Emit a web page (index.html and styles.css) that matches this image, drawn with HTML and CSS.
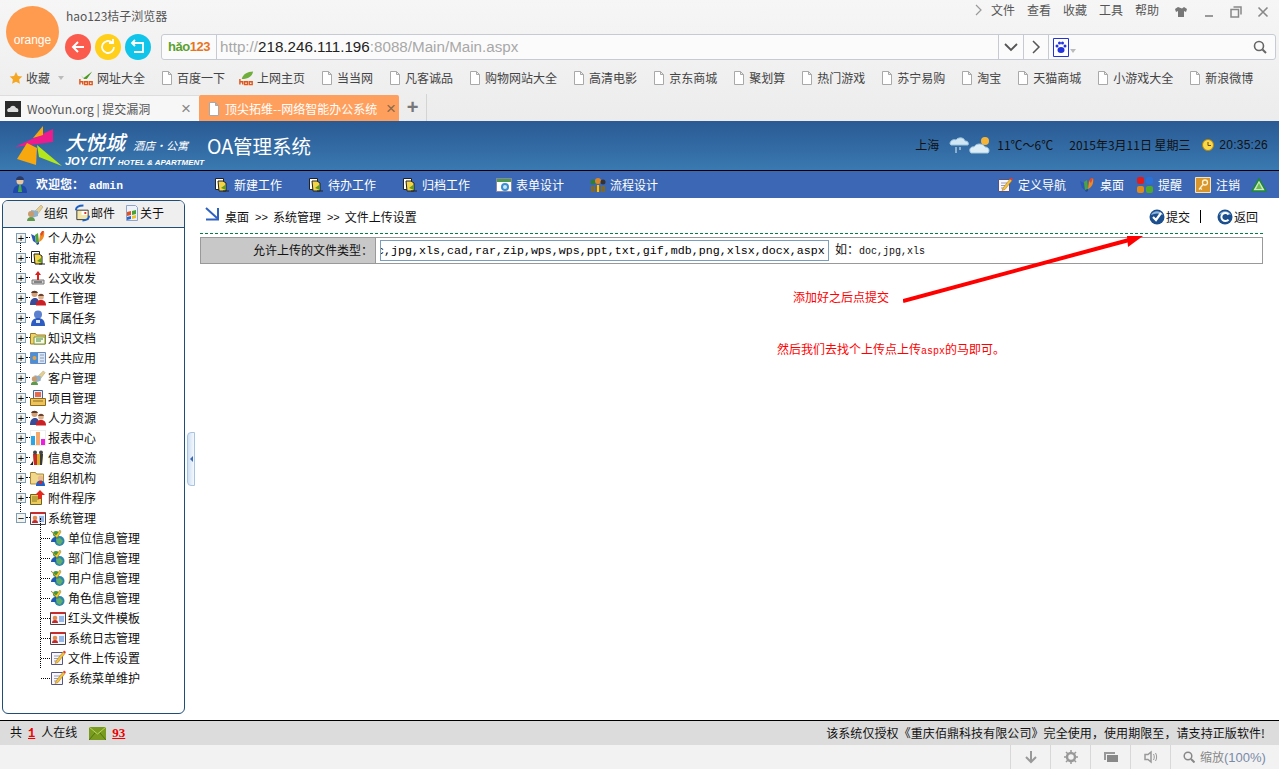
FILE: index.html
```html
<!DOCTYPE html>
<html lang="zh-CN">
<head>
    <meta charset="UTF-8">
    <title>文件上传设置</title>
    <link rel="stylesheet" href="styles.css">
</head>
<body>

<!-- iconos -->
<svg class="defs" aria-hidden="true">
    <symbol id="i-star" viewBox="0 0 16 16"><path d="M8 1l2.2 4.6 5 .6-3.7 3.4 1 5L8 12.2l-4.500 2.400 1-5L.8 6.200l5-.6z" fill="#f5a623"/></symbol>
    <symbol id="i-doc" viewBox="0 0 12 16"><path d="M1.500 1.500h6l3 3v10h-9z M7.500 1.500v3h3" fill="#fff" stroke="#a9a9a9"/></symbol>
    <symbol id="i-hao" viewBox="0 0 18 16"><path d="M3 5l3 3 9-7-7 10z" fill="#4c9a1e"/><path d="M1 9h16v6H1z" fill="#f3f3f3"/><path d="M2 9v6M2 12h3v3M7 12h3v3H7zM12 12h3v3h-3z" fill="none" stroke="#e2571b" stroke-width="1.500"/></symbol>
    <symbol id="i-leaf" viewBox="0 0 18 16"><path d="M4 9c1-5 6-8 12-8-1 5-5 8-12 8z" fill="#6fae3a"/><path d="M2 9v6M2 12h3v3M7 12h3v3H7zM12 12h3v3h-3z" fill="none" stroke="#e2571b" stroke-width="1.500"/></symbol>
    <symbol id="i-flow" viewBox="0 0 16 16"><path d="M1.500 1.500h8v11h-8z" fill="#fff" stroke="#222"/><path d="M4 4h5l3 2v8H5z" fill="#f4d548" stroke="#222"/><path d="M7 11l4-3 1 5z" fill="#5e9e26"/><path d="M9 14h6" stroke="#222"/></symbol>
    <symbol id="i-form" viewBox="0 0 16 16"><path d="M.500 1.500h15v13H.500z" fill="#fff" stroke="#88a"/><path d="M1 2h14v3H1z" fill="#4c9a4a"/><circle cx="9" cy="10" r="4" fill="#3a8fd0"/><circle cx="9" cy="10" r="2" fill="#cfe8f8"/></symbol>
    <symbol id="i-team" viewBox="0 0 16 16"><path d="M1 15V9h4v6zM6 15V8h4v7zM11 15V9h4v6z" fill="#7d6a2a"/><circle cx="3" cy="5" r="2.500" fill="#2f7d33"/><circle cx="8" cy="4" r="3" fill="#d8862a"/><circle cx="13" cy="5" r="2.500" fill="#333"/><path d="M7 8h2v7H7z" fill="#f2c230"/></symbol>
    <symbol id="i-note" viewBox="0 0 16 16"><path d="M1.500 2.500h11v12h-11z" fill="#f6f6fb" stroke="#55557f"/><path d="M4 6h6M4 8.500h4M4 11h3" stroke="#9a9ab5"/><path d="M6 11l7-9 2 1.500-7 9-3 1z" fill="#f3c33c" stroke="#a5701c" stroke-width=".5"/><path d="M13 2l1-1.500 2 1.500-1 1.500z" fill="#e33"/></symbol>
    <symbol id="i-flag" viewBox="0 0 16 16"><path d="M1 4l4 2 1 7-3-2z" fill="#2b57b8"/><path d="M5 5l3-2 1 9-3 1z" fill="#4ca33a"/><path d="M9 12l1-8 4-3c1 5-1 9-5 11z" fill="#f08a24"/><path d="M10 4l2-3 2 0-2 5z" fill="#e24a2a"/><path d="M6 13l3-1 0 2-2 1z" fill="#264a90"/></symbol>
    <symbol id="i-dots" viewBox="0 0 16 16"><rect x="0" y="0" width="7" height="7" rx="2" fill="#e21c1c"/><rect x="9" y="0" width="7" height="7" rx="2" fill="#2a72d8"/><rect x="0" y="9" width="7" height="7" rx="2" fill="#e08a1c"/><rect x="9" y="9" width="7" height="7" rx="2" fill="#4ea82c"/></symbol>
    <symbol id="i-key" viewBox="0 0 16 16"><path d="M.500.500h15v15H.500z" fill="#d9962c" stroke="#f6e3b8"/><circle cx="10" cy="5.500" r="2.500" fill="none" stroke="#fff3d6" stroke-width="1.300"/><path d="M8 7.500l-4 5M5 11l2 1.500" fill="none" stroke="#fff3d6" stroke-width="1.300"/></symbol>
    <symbol id="i-tri" viewBox="0 0 16 14"><path d="M8 1l7 12H1z" fill="#cfe8c2" stroke="#1f8a34" stroke-width="1.500"/><path d="M8 5l3 6H5z" fill="#6cc04a"/></symbol>
    <symbol id="i-admin" viewBox="0 0 16 18"><circle cx="8" cy="5" r="3.500" fill="#e8c6a0"/><path d="M4 4c0-5 8-5 8 0z" fill="#2c3a66"/><path d="M1 17c0-6 3-8 7-8s7 2 7 8z" fill="#1f49a8"/><path d="M7 9h2l1 7H6z" fill="#43a84a"/></symbol>
    <symbol id="i-org" viewBox="0 0 18 18"><path d="M8 8l7-7 2 2-6 8z" fill="#e3cf94" stroke="#a89860" stroke-width=".5"/><path d="M5 6l7 1v5l-6 2z" fill="#8fb0c8"/><circle cx="5" cy="10" r="3" fill="#c99a6c"/><path d="M1 17c0-3 2-4 4-4s4 1 4 4z" fill="#5d9a4c"/></symbol>
    <symbol id="i-mail" viewBox="0 0 18 18"><path d="M3 6h12v10H3z" fill="#f3e5a8" stroke="#333"/><path d="M8 7h6v4H8z" fill="#fff"/><path d="M11 8h2v2h-2z" fill="#d33"/><path d="M2 6c0-4 4-5 8-5M16 12c0 3-3 5-7 5" fill="none" stroke="#1c62c8" stroke-width="2"/></symbol>
    <symbol id="i-about" viewBox="0 0 16 18"><path d="M2.500 1.500h9l2 2v13h-11z" fill="#eef3fb" stroke="#8ea4c8"/><path d="M3 8l4-1v4l-4 1z" fill="#e2501f"/><path d="M8 7l4-1v4l-4 1z" fill="#46a232"/><path d="M3 13l4-1v3l-4 1z" fill="#2a66c8"/><path d="M8 12l4-1v3l-4 1z" fill="#eec02a"/></symbol>
    <symbol id="i-stamp" viewBox="0 0 16 16"><path d="M2 10h12v4H2z" fill="#d4d4d4" stroke="#777"/><path d="M4 12h8" stroke="#333"/><path d="M8 1l3 4H9v5H7V5H5z" fill="#d8201c"/></symbol>
    <symbol id="i-people" viewBox="0 0 16 16"><circle cx="4.500" cy="4" r="3" fill="#d4a078"/><path d="M1 3c1-3 6-3 7 0z" fill="#5c3a2a"/><path d="M0 15c0-5 2-7 5-7s4 2 4 7z" fill="#3a4c98"/><circle cx="11" cy="7" r="2.800" fill="#e0b08c"/><path d="M8 6c1-3 5-3 6 0z" fill="#6c4430"/><path d="M6 15.500c0-4 2-5.500 5-5.500s5 1.500 5 5.500z" fill="#cc2024"/></symbol>
    <symbol id="i-person" viewBox="0 0 16 16"><circle cx="8" cy="4.500" r="4" fill="#5a80cf"/><path d="M1 16c0-6 3-8 7-8s7 2 7 8z" fill="#2f5cc0"/><path d="M6 10h4v3H6z" fill="#dfe8fa"/></symbol>
    <symbol id="i-folder" viewBox="0 0 16 16"><path d="M.500 3.500h5l1 1.500h9v9H.500z" fill="#f2d36a" stroke="#9a7e26"/><path d="M4 7h11v7H4z" fill="#f9f7e8" stroke="#7a9a3a"/><path d="M6 9h7M6 11h5" stroke="#3c8a3c"/></symbol>
    <symbol id="i-pub" viewBox="0 0 16 16"><path d="M.500 2.500h15v11H.500z" fill="#dbe6f5" stroke="#6a8cc0"/><path d="M1 3h7v10H1z" fill="#4a90d8"/><circle cx="4.500" cy="8" r="2" fill="#e8a040"/><path d="M10 5h4M10 8h4M10 11h4" stroke="#8a9ab5"/></symbol>
    <symbol id="i-box" viewBox="0 0 16 16"><path d="M3.500 .500h9v9h-9z" fill="#e9eef8" stroke="#44689a"/><path d="M5 2h6v5H5z" fill="#e86a4c"/><path d="M.500 8.500h15v7H.500z" fill="#eec45a" stroke="#8e6c1c"/><path d="M3 11h10" stroke="#8e6c1c"/></symbol>
    <symbol id="i-bars" viewBox="0 0 16 16"><path d="M.500.500h15v15H.500z" fill="#fff" stroke="#ddd" stroke-dasharray="1 1"/><path d="M1 6h4v9H1z" fill="#2aa6e8"/><path d="M6 2h4v13H6z" fill="#f5a86c"/><path d="M11 9h4v6h-4z" fill="#f01ce0"/></symbol>
    <symbol id="i-gift" viewBox="0 0 16 16"><path d="M3 4h10l-1 11H4z" fill="#d8b22a"/><path d="M3 4h4v11H4z" fill="#c62a2a"/><path d="M10 4h3l-1 11h-2z" fill="#3a3a3a"/><circle cx="5" cy="2.500" r="2" fill="#444"/><circle cx="11" cy="2.500" r="2" fill="#444"/><path d="M0 15l3-4v4z" fill="#222"/></symbol>
    <symbol id="i-orgf" viewBox="0 0 16 16"><path d="M.500 2.500h5l1 1.500h7v10H.500z" fill="#f2d88a" stroke="#a88a3a"/><circle cx="10.500" cy="8" r="2.600" fill="#e8b890"/><path d="M6 16c0-4 2-5.500 4.500-5.500S15 12 15 16z" fill="#2060c8"/><path d="M9 11h3v3H9z" fill="#d82424"/></symbol>
    <symbol id="i-att" viewBox="0 0 16 16"><path d="M.500 4.500h11v10H.500z" fill="#eccb5a" stroke="#6e6420"/><path d="M2 7h7M2 9h7M2 11h5" stroke="#8a7a20"/><path d="M10 0l5 5h-3v4H8V5H5z" fill="#e62a20"/></symbol>
    <symbol id="i-card" viewBox="0 0 16 16"><path d="M.500 2.500h15v12H.500z" fill="#f4f6fb" stroke="#444"/><path d="M1 2h14v2H1z" fill="#c92a2a"/><circle cx="5" cy="8" r="2.300" fill="#e08a50"/><path d="M2 13c0-2 1-3 3-3s3 1 3 3z" fill="#c42828"/><path d="M9 7h5M9 9h5M9 11h5" stroke="#3a7ad0"/></symbol>
    <symbol id="i-globe" viewBox="0 0 16 16"><circle cx="9.500" cy="11" r="5" fill="#2f86a8"/><path d="M6 9l4-1 3 3-3 4-3-2z" fill="#5fae6a"/><circle cx="6" cy="4" r="3" fill="#3b9a44"/><path d="M1 1l5 4 4-5 1 2-4 6z" fill="#f0cc2a" stroke="#6a5a10" stroke-width=".4"/><path d="M1 12c0-3 2-5 5-5v5z" fill="#1f5ab0"/></symbol>
    <symbol id="i-ok" viewBox="0 0 16 16"><circle cx="8" cy="8" r="7.500" fill="#1c4f8e"/><path d="M2 6c2-5 10-5 12 0-4-2-8-2-12 0z" fill="#8db6e0"/><path d="M4 8l3 3 5-7" fill="none" stroke="#fff" stroke-width="2.200"/></symbol>
    <symbol id="i-back" viewBox="0 0 16 16"><circle cx="8" cy="8" r="7.500" fill="#1c4f8e"/><path d="M2 6c2-5 10-5 12 0-4-2-8-2-12 0z" fill="#8db6e0"/><path d="M11.500 5.500A4 4 0 1 0 11.500 10.500" fill="none" stroke="#fff" stroke-width="2"/></symbol>
</svg>

<div class="logo-orange">orange</div>

<!-- navegador -->
<header class="browser">
    <div class="title-row">
        <span class="app-name">hao123桔子浏览器</span>
        <div class="menu">
            <svg class="menu-more" width="8" height="12" viewBox="0 0 8 12"><path d="M1 1l5 5-5 5" fill="none" stroke="#999" stroke-width="1.200"/></svg>
            <span>文件</span><span>查看</span><span>收藏</span><span>工具</span><span>帮助</span>
        </div>
        <div class="win-btns">
            <svg width="14" height="12" viewBox="0 0 14 12"><path d="M4 1L1 3l1 3 2-1v6h6V5l2 1 1-3-3-2-2 1.500z" fill="#777"/></svg>
            <svg width="12" height="12" viewBox="0 0 12 12"><path d="M2 10h8" stroke="#999" stroke-width="2"/></svg>
            <svg width="12" height="12" viewBox="0 0 12 12"><path d="M3.500 1h7.500v7.500M1 3.500h7.500V11H1z" fill="none" stroke="#888" stroke-width="1.500"/></svg>
            <svg width="12" height="12" viewBox="0 0 12 12"><path d="M1.500 1.500l9 9M10.500 1.500l-9 9" stroke="#888" stroke-width="1.600"/></svg>
        </div>
    </div>

    <div class="toolbar">
        <div class="nav-btns">
            <span class="round round-red"><svg width="16" height="16" viewBox="0 0 16 16"><path d="M14 8H3M8 3L3 8l5 5" fill="none" stroke="#fff" stroke-width="2"/></svg></span>
            <span class="round round-yellow"><svg width="16" height="16" viewBox="0 0 16 16"><path d="M12 3.500A6 6 0 1 0 14 8M9 4h4V0" fill="none" stroke="#fff" stroke-width="1.800"/></svg></span>
            <span class="round round-blue"><svg width="16" height="16" viewBox="0 0 16 16"><path d="M5 1L2 4l3 3M2 4h11v9H4" fill="none" stroke="#fff" stroke-width="1.800"/></svg></span>
        </div>
        <div class="address">
            <span class="hao-logo"><b class="hao-green">hǎo</b><b class="hao-orange">123</b></span>
            <span class="url"><i>http://</i>218.246.111.196<i>:8088/Main/Main.aspx</i></span>
            <span class="addr-btn"><svg width="14" height="9" viewBox="0 0 14 9"><path d="M1 1l6 6 6-6" fill="none" stroke="#555" stroke-width="1.800"/></svg></span>
            <span class="addr-btn"><svg width="9" height="14" viewBox="0 0 9 14"><path d="M1 1l6 6-6 6" fill="none" stroke="#555" stroke-width="1.500"/></svg></span>
            <span class="search">
                <svg width="16" height="19" viewBox="0 0 16 19"><path d="M.500.500h15v18H.500z" fill="#fff" stroke="#2233dd"/><ellipse cx="8" cy="12" rx="3.500" ry="3" fill="#2233dd"/><circle cx="4" cy="8" r="1.500" fill="#2233dd"/><circle cx="12" cy="8" r="1.500" fill="#2233dd"/><circle cx="6.500" cy="5" r="1.500" fill="#2233dd"/><circle cx="9.500" cy="5" r="1.500" fill="#2233dd"/></svg>
                <em class="caret caret-paw"></em>
                <svg class="glass" width="14" height="14" viewBox="0 0 14 14"><circle cx="6" cy="6" r="4.500" fill="none" stroke="#666" stroke-width="1.600"/><path d="M9.500 9.500L13 13" stroke="#666" stroke-width="2"/></svg>
            </span>
        </div>
    </div>

    <div class="bookmarks">
        <span class="bm bm-fav"><svg width="14" height="14"><use href="#i-star"/></svg>收藏<em class="caret"></em></span>
        <span class="bm bm-hao"><svg width="17" height="16"><use href="#i-hao"/></svg>网址大全</span>
        <span class="bm"><svg width="12" height="16"><use href="#i-doc"/></svg>百度一下</span>
        <span class="bm bm-hao"><svg width="17" height="16"><use href="#i-leaf"/></svg>上网主页</span>
        <span class="bm"><svg width="12" height="16"><use href="#i-doc"/></svg>当当网</span>
        <span class="bm"><svg width="12" height="16"><use href="#i-doc"/></svg>凡客诚品</span>
        <span class="bm"><svg width="12" height="16"><use href="#i-doc"/></svg>购物网站大全</span>
        <span class="bm"><svg width="12" height="16"><use href="#i-doc"/></svg>高清电影</span>
        <span class="bm"><svg width="12" height="16"><use href="#i-doc"/></svg>京东商城</span>
        <span class="bm"><svg width="12" height="16"><use href="#i-doc"/></svg>聚划算</span>
        <span class="bm"><svg width="12" height="16"><use href="#i-doc"/></svg>热门游戏</span>
        <span class="bm"><svg width="12" height="16"><use href="#i-doc"/></svg>苏宁易购</span>
        <span class="bm"><svg width="12" height="16"><use href="#i-doc"/></svg>淘宝</span>
        <span class="bm"><svg width="12" height="16"><use href="#i-doc"/></svg>天猫商城</span>
        <span class="bm"><svg width="12" height="16"><use href="#i-doc"/></svg>小游戏大全</span>
        <span class="bm"><svg width="12" height="16"><use href="#i-doc"/></svg>新浪微博</span>
    </div>

    <div class="tabs">
        <div class="tab">
            <svg width="16" height="16" viewBox="0 0 16 16"><path d="M0 0h16v16H0z" fill="#2b2b2b"/><path d="M3 11c-2-2 0-4 2-4 1-3 5-3 6 0 2 0 3 2 2 4z" fill="#ddd"/></svg>
            <span class="tab-text">WooYun.org | 提交漏洞</span>
            <span class="tab-close">×</span>
        </div>
        <div class="tab tab-active">
            <svg width="12" height="16"><use href="#i-doc"/></svg>
            <span class="tab-text">顶尖拓维--网络智能办公系统</span>
            <span class="tab-close">×</span>
        </div>
        <div class="tab-add">+</div>
    </div>
</header>

<!-- cabecera OA -->
<div class="oa-head">
    <svg class="joy-mark" width="50" height="44" viewBox="0 0 50 44">
        <path d="M1 23L39 5v13z" fill="#ec1c8c"/>
        <path d="M3 35L13 19l10 5-1 17z" fill="#f7a80e"/>
        <path d="M29 2L19 14l10-3z" fill="#f7a80e"/>
        <path d="M23 21l25 21-23-9z" fill="#b4e61c"/>
    </svg>
    <div class="joy-name">
        <div class="joy-cn">大悦城<small>酒店·公寓</small></div>
        <div class="joy-en">JOY CITY <small>HOTEL &amp; APARTMENT</small></div>
    </div>
    <div class="oa-title">OA管理系统</div>
    <div class="oa-info">
        <span class="city">上海</span>
        <svg class="weather" width="44" height="22" viewBox="0 0 44 22">
            <path d="M2 10c0-4 4-5 6-4 2-3 8-3 9 1 3 0 4 2 3 4H3z" fill="#cfe6f5" stroke="#9dc4dc"/>
            <path d="M8 13v6M12 13v3" stroke="#a8c6da" stroke-width="1.500"/>
            <circle cx="37" cy="7" r="4" fill="#f4b43a"/>
            <path d="M23 19c-3-3 0-7 3-6 2-4 9-4 11 0 4 0 5 4 3 6z" fill="#dcedf7" stroke="#a4c8de"/>
        </svg>
        <span class="temp">11℃～6℃</span>
        <span class="date">2015年3月11日 星期三</span>
        <svg class="clock" width="12" height="12" viewBox="0 0 12 12"><circle cx="6" cy="6" r="5.500" fill="#f9d84a" stroke="#b8860b"/><path d="M6 3v3.500h3" fill="none" stroke="#704a00"/></svg>
        <span class="time">20:35:26</span>
    </div>
</div>

<nav class="oa-nav">
    <div class="welcome"><svg width="16" height="18"><use href="#i-admin"/></svg><b>欢迎您：<span class="admin">admin</span></b></div>
    <div class="nav-left">
        <span class="nav-item"><svg width="16" height="16"><use href="#i-flow"/></svg>新建工作</span>
        <span class="nav-item"><svg width="16" height="16"><use href="#i-flow"/></svg>待办工作</span>
        <span class="nav-item"><svg width="16" height="16"><use href="#i-flow"/></svg>归档工作</span>
        <span class="nav-item"><svg width="16" height="16"><use href="#i-form"/></svg>表单设计</span>
        <span class="nav-item"><svg width="16" height="16"><use href="#i-team"/></svg>流程设计</span>
    </div>
    <div class="nav-right">
        <span class="nav-item"><svg width="16" height="16"><use href="#i-note"/></svg>定义导航</span>
        <span class="nav-item"><svg width="16" height="16"><use href="#i-flag"/></svg>桌面</span>
        <span class="nav-item"><svg width="16" height="16"><use href="#i-dots"/></svg>提醒</span>
        <span class="nav-item"><svg width="16" height="16"><use href="#i-key"/></svg>注销</span>
        <svg class="nav-up" width="16" height="14"><use href="#i-tri"/></svg>
    </div>
</nav>

<div class="oa-body">
    <aside class="panel">
        <div class="panel-tools">
            <span class="ptool"><svg width="18" height="18"><use href="#i-org"/></svg>组织</span>
            <span class="ptool"><svg width="17" height="18"><use href="#i-mail"/></svg>邮件</span>
            <span class="ptool ptool-last"><svg width="16" height="18"><use href="#i-about"/></svg>关于</span>
        </div>
        <ul class="tree">
            <li class="tree-row"><span class="pm">+</span><svg><use href="#i-flag"/></svg>个人办公</li>
            <li class="tree-row"><span class="pm">+</span><svg><use href="#i-flow"/></svg>审批流程</li>
            <li class="tree-row"><span class="pm">+</span><svg><use href="#i-stamp"/></svg>公文收发</li>
            <li class="tree-row"><span class="pm">+</span><svg><use href="#i-people"/></svg>工作管理</li>
            <li class="tree-row"><span class="pm">+</span><svg><use href="#i-person"/></svg>下属任务</li>
            <li class="tree-row"><span class="pm">+</span><svg><use href="#i-folder"/></svg>知识文档</li>
            <li class="tree-row"><span class="pm">+</span><svg><use href="#i-pub"/></svg>公共应用</li>
            <li class="tree-row"><span class="pm">+</span><svg><use href="#i-org"/></svg>客户管理</li>
            <li class="tree-row"><span class="pm">+</span><svg><use href="#i-box"/></svg>项目管理</li>
            <li class="tree-row"><span class="pm">+</span><svg><use href="#i-people"/></svg>人力资源</li>
            <li class="tree-row"><span class="pm">+</span><svg><use href="#i-bars"/></svg>报表中心</li>
            <li class="tree-row"><span class="pm">+</span><svg><use href="#i-gift"/></svg>信息交流</li>
            <li class="tree-row"><span class="pm">+</span><svg><use href="#i-orgf"/></svg>组织机构</li>
            <li class="tree-row"><span class="pm">+</span><svg><use href="#i-att"/></svg>附件程序</li>
            <li class="tree-row"><span class="pm">−</span><svg><use href="#i-card"/></svg>系统管理</li>
            <li>
                <ul class="tree-sub">
                    <li class="tree-row"><svg><use href="#i-globe"/></svg>单位信息管理</li>
                    <li class="tree-row"><svg><use href="#i-globe"/></svg>部门信息管理</li>
                    <li class="tree-row"><svg><use href="#i-globe"/></svg>用户信息管理</li>
                    <li class="tree-row"><svg><use href="#i-globe"/></svg>角色信息管理</li>
                    <li class="tree-row"><svg><use href="#i-card"/></svg>红头文件模板</li>
                    <li class="tree-row"><svg><use href="#i-card"/></svg>系统日志管理</li>
                    <li class="tree-row"><svg><use href="#i-note"/></svg>文件上传设置</li>
                    <li class="tree-row"><svg><use href="#i-note"/></svg>系统菜单维护</li>
                </ul>
            </li>
        </ul>
    </aside>

    <div class="splitter"><em></em></div>

    <main class="main">
        <div class="crumb-bar">
            <svg class="crumb-icon" width="15" height="14" viewBox="0 0 15 14"><path d="M1 1l11 10M13 1v11.500H1" fill="none" stroke="#2f62c0" stroke-width="2"/></svg>
            <span class="crumb">桌面</span><span class="crumb-sep">&gt;&gt;</span>
            <span class="crumb">系统管理</span><span class="crumb-sep">&gt;&gt;</span>
            <span class="crumb">文件上传设置</span>
            <div class="crumb-actions">
                <span class="act"><svg width="16" height="16"><use href="#i-ok"/></svg>提交</span>
                <span class="act-sep"></span>
                <span class="act"><svg width="16" height="16"><use href="#i-back"/></svg>返回</span>
            </div>
        </div>

        <div class="field">
            <label class="field-label" for="tipos">允许上传的文件类型：</label>
            <div class="field-value">
                <input id="tipos" class="field-input" type="text" value="doc,jpg,xls,cad,rar,zip,wps,wps,ppt,txt,gif,mdb,png,xlsx,docx,aspx">
                <span class="hint">如：<span class="hint-ex">doc,jpg,xls</span></span>
            </div>
        </div>

        <p class="note note-a">添加好之后点提交</p>
        <p class="note note-b">然后我们去找个上传点上传<span class="note-latin">aspx</span>的马即可。</p>

        <svg class="red-arrow" width="245" height="70" viewBox="0 0 245 70">
            <path d="M0 67L226 6" stroke="#ff0000" stroke-width="4"/>
            <path d="M240 2H224l1 11z" fill="#ff0000"/>
        </svg>
    </main>
</div>

<footer class="oa-foot">
    <span class="online">共<u>1</u>人在线</span>
    <svg class="mail-ico" width="17" height="13" viewBox="0 0 17 13"><path d="M0 0h17v13H0z" fill="#7a9a20"/><path d="M0 0l8.500 7L17 0" fill="none" stroke="#b8d65a"/><path d="M0 13l6-7M17 13l-6-7" stroke="#4f7410"/></svg>
    <u class="mail-count">93</u>
    <span class="license">该系统仅授权《重庆佰鼎科技有限公司》完全使用，使用期限至，请支持正版软件!</span>
</footer>

<div class="statusbar">
    <span class="st-cell"><svg width="14" height="14" viewBox="0 0 14 14"><path d="M7 1v11M2 7l5 5 5-5" fill="none" stroke="#999" stroke-width="2"/></svg></span>
    <span class="st-cell"><svg width="14" height="14" viewBox="0 0 14 14"><circle cx="7" cy="7" r="4" fill="none" stroke="#999" stroke-width="2.500"/><path d="M7 0v3M7 11v3M0 7h3M11 7h3M2 2l2 2M10 10l2 2M12 2l-2 2M4 10l-2 2" stroke="#999" stroke-width="1.500"/></svg></span>
    <span class="st-cell"><svg width="16" height="14" viewBox="0 0 16 14"><path d="M1 2h11v2H3v6H1z" fill="#999"/><path d="M4 5h11v7H4z" fill="#888"/></svg></span>
    <span class="st-cell"><svg width="14" height="14" viewBox="0 0 14 14"><path d="M1 4.500h3L7 2v10L4 9.500H1z" fill="none" stroke="#999" stroke-width="1.500"/><path d="M9.500 4c1 2 1 4 0 6M11.500 3c1.500 2.500 1.500 5.500 0 8" fill="none" stroke="#999"/></svg></span>
    <span class="st-zoom"><svg width="12" height="12" viewBox="0 0 12 12"><circle cx="5" cy="5" r="3.800" fill="none" stroke="#888" stroke-width="1.500"/><path d="M8 8l3.500 3.500" stroke="#888" stroke-width="2"/></svg><span>缩放<span class="zoom-num">(100%)</span></span></span>
</div>

</body>
</html>
```

FILE: styles.css
```css
* {
    box-sizing: border-box;
}

html, body {
    margin: 0;
    height: 769px;
    overflow: hidden;
}

body {
    position: relative;
    display: flex;
    flex-direction: column;
    background: #fff;
    color: #111;
    font-family: "Noto Sans CJK SC", "Liberation Sans", sans-serif;
    font-size: 12px;
    line-height: 16px;
}

ul {
    list-style: none;
    margin: 0;
    padding: 0;
}

em, i {
    font-style: normal;
}

svg {
    flex: none;
    display: block;
}

.defs {
    position: absolute;
    width: 0;
    height: 0;
}

/* navegador */
.browser {
    flex: none;
    height: 121px;
    background: linear-gradient(#f6f6f6, #ececec);
}

.logo-orange {
    position: absolute;
    left: 6px;
    top: 6px;
    width: 53px;
    height: 52px;
    border-radius: 50%;
    background: #ff9b4f;
    color: #fff;
    font-family: "Liberation Sans", sans-serif;
    font-size: 12px;
    line-height: 12px;
    text-align: center;
    padding-top: 28px;
}

.title-row {
    height: 33px;
    display: flex;
    align-items: flex-start;
    padding: 8px 13px 0 66px;
    color: #555;
}

.app-name {
    flex: 1;
    font-size: 12px;
}

.menu {
    display: flex;
    align-items: center;
    gap: 12px;
    margin-top: -6px;
    height: 16px;
}

.menu-more {
    margin-right: -4px;
}

.win-btns {
    display: flex;
    gap: 15px;
    margin: -2px 0 0 15px;
    width: 92px;
}

.toolbar {
    height: 27px;
    margin-top: 1px;
    display: flex;
    padding-left: 65px;
    padding-right: 3px;
}

.nav-btns {
    display: flex;
    gap: 4px;
    width: 96px;
}

.round {
    width: 26px;
    height: 26px;
    border-radius: 50%;
    display: flex;
    align-items: center;
    justify-content: center;
}

.round-red { background: #fb5b4c; }
.round-yellow { background: #ffcf1a; }
.round-blue { background: #10c4ea; }

.address {
    flex: 1;
    display: flex;
    height: 26px;
    background: #fbfbfb;
    border: 1px solid #c6cbd3;
    border-radius: 3px;
    align-items: stretch;
}

.hao-logo {
    width: 55px;
    border-right: 1px solid #c6cbd3;
    font-family: "Liberation Sans", sans-serif;
    font-size: 13px;
    line-height: 24px;
    text-align: center;
    letter-spacing: -0.5px;
}

.hao-green { color: #5aa02c; }
.hao-orange { color: #e8741c; }

.url {
    flex: 1;
    padding-left: 3px;
    font-family: "Liberation Sans", sans-serif;
    font-size: 15.200px;
    line-height: 24px;
    color: #222;
}

.url i {
    color: #a8a8a8;
}

.addr-btn {
    width: 25px;
    border-left: 1px solid #c6cbd3;
    display: flex;
    align-items: center;
    justify-content: center;
}

.search {
    width: 227px;
    border-left: 1px solid #c6cbd3;
    display: flex;
    align-items: center;
    padding: 0 8px 0 4px;
}

.glass {
    margin-left: auto;
}

.bookmarks {
    height: 33px;
    display: flex;
    align-items: center;
    gap: 16px;
    padding-left: 9px;
    color: #444;
}

.bm {
    display: flex;
    align-items: center;
    gap: 4px;
    white-space: nowrap;
}

.bm-fav {
    gap: 3px;
    margin-right: 1px;
}

.bm-hao {
    gap: 2px;
    margin-left: -3px;
}

.caret {
    width: 0;
    height: 0;
    margin-left: 5px;
    border: 3px solid transparent;
    border-top: 4px solid #bbb;
    border-bottom: 0;
}

.caret-paw {
    margin: 8px 0 0 1px;
}

.tabs {
    height: 28px;
    display: flex;
    border-bottom: 1px solid #b9b9b9;
}

.tab {
    width: 199px;
    height: 27px;
    margin-top: 1px;
    display: flex;
    align-items: center;
    gap: 6px;
    padding: 0 8px 0 5px;
    background: #f7f7f7;
    border-top: 1px solid #ddd;
    color: #555;
}

.tab-active {
    width: 200px;
    background: #ff9f5e;
    border-top-color: #ff9f5e;
    border-radius: 2px 2px 0 0;
    color: #fff;
    padding: 0 8px 0 9px;
    gap: 5px;
}

.tab-text {
    flex: 1;
    white-space: nowrap;
}

.tab-close {
    font-family: "Liberation Sans", sans-serif;
    font-size: 17px;
    color: #888;
}

.tab-active .tab-text {
    flex: none;
    width: 156px;
}

.tab-active .tab-close {
    color: #8a6a4a;
}

.tab-add {
    width: 28px;
    border-right: 1px solid #d4d4d4;
    font-family: "Liberation Sans", sans-serif;
    font-size: 20px;
    line-height: 27px;
    text-align: center;
    font-weight: bold;
    color: #777;
}

/* cabecera OA */
.oa-head {
    flex: none;
    height: 50px;
    display: flex;
    align-items: flex-start;
    background: linear-gradient(#2a5a94, #3a79b1);
    border-bottom: 1px solid #000;
    padding: 3px 11px 0 14px;
}

.joy-name {
    margin: 7px 0 0 1px;
    width: 142px;
    color: #fff;
    font-style: italic;
}

.joy-cn {
    font-size: 20px;
    line-height: 22px;
    font-weight: 500;
    white-space: nowrap;
}

.joy-cn small {
    font-size: 11px;
    font-weight: normal;
    margin-left: 8px;
}

.joy-en {
    font-family: "Liberation Sans", sans-serif;
    font-size: 11px;
    line-height: 11px;
    font-weight: bold;
    white-space: nowrap;
}

.joy-en small {
    font-size: 8px;
}

.oa-title {
    margin-top: 10px;
    font-size: 19.500px;
    line-height: 24px;
    color: #fff;
}

.oa-info {
    margin-left: auto;
    margin-top: 9px;
    display: flex;
    align-items: center;
    height: 24px;
    color: #111;
}

.city {
    font-size: 12px;
}

.weather {
    margin-left: 9px;
}

.temp {
    margin-left: 5px;
    width: 72px;
}

.date {
    width: 133px;
}

.time {
    margin-left: 5px;
    letter-spacing: 0.250px;
    font-family: "Liberation Sans", sans-serif;
    font-size: 12px;
}

.oa-nav {
    flex: none;
    height: 27px;
    display: flex;
    align-items: center;
    background: #3c67b5;
    color: #fff;
    padding: 0 12px;
}

.welcome {
    display: flex;
    align-items: center;
    gap: 8px;
    width: 202px;
}

.admin {
    margin-left: 5px;
    font-family: "Liberation Mono", monospace;
    font-size: 11.300px;
}

.nav-left {
    display: flex;
    gap: 26px;
}

.nav-right {
    margin-left: auto;
    display: flex;
    align-items: center;
    gap: 13px;
}

.nav-up {
    margin-left: -2px;
}

.nav-item {
    display: flex;
    align-items: center;
    gap: 5px;
    white-space: nowrap;
}

.nav-left .nav-item {
    gap: 4px;
}

/* contenido */
.oa-body {
    flex: none;
    height: 522px;
    display: flex;
    padding-left: 2px;
}

.panel {
    flex: none;
    width: 183px;
    height: 514px;
    margin-top: 2px;
    border: 1px solid #1f4e79;
    border-radius: 6px;
    overflow: hidden;
}

.panel-tools {
    height: 27px;
    background: #efefef;
    border-bottom: 1px solid #1f4e79;
    display: flex;
    align-items: center;
    gap: 6px;
    padding: 0 0 2px 23px;
}

.ptool {
    display: flex;
    align-items: center;
}

.ptool-last {
    margin-left: 3px;
}

.tree {
    position: relative;
    padding: 0 0 0 17px;
}

.tree::before {
    content: "";
    position: absolute;
    left: 17px;
    top: 10px;
    height: 280px;
    border-left: 1px dotted #000;
}

.tree-row {
    position: relative;
    height: 20px;
    display: flex;
    align-items: center;
    white-space: nowrap;
    gap: 2px;
}

.tree-row svg {
    width: 16px;
    height: 16px;
}

.pm {
    flex: none;
    width: 10px;
    height: 10px;
    margin-left: -4px;
    margin-right: 2px;
    border: 1px solid #7f9db9;
    background: #f4f4ee;
    font-family: "Liberation Sans", sans-serif;
    font-size: 11px;
    line-height: 8px;
    text-align: center;
    color: #000;
    position: relative;
}

.pm::after {
    content: "";
    position: absolute;
    left: 9px;
    top: 3px;
    width: 4px;
    border-top: 1px dotted #000;
}

.tree-sub {
    position: relative;
    padding-left: 30px;
}

.tree-sub::before {
    content: "";
    position: absolute;
    left: 20px;
    top: -10px;
    height: 150px;
    border-left: 1px dotted #000;
}

.tree-sub .tree-row::before {
    content: "";
    position: absolute;
    left: -9px;
    top: 10px;
    width: 9px;
    border-top: 1px dotted #000;
}

.splitter {
    flex: none;
    align-self: center;
    width: 8px;
    height: 54px;
    margin: 0 5px 0 2px;
    background: linear-gradient(90deg, #cfe0f3, #f4f8fc);
    border: 1px solid #a9c4e0;
    border-radius: 4px 0 0 4px;
    display: flex;
    align-items: center;
    justify-content: center;
}

.splitter em {
    width: 0;
    height: 0;
    border: 3px solid transparent;
    border-right: 3px solid #3c67b5;
    border-left: 0;
}

.main {
    position: relative;
    flex: none;
    width: 1063px;
}

.crumb-bar {
    height: 36px;
    display: flex;
    align-items: center;
    border-bottom: 1px dashed #008040;
    padding: 2px 5px 0 5px;
}

.crumb-icon {
    margin: -6px 5px 0 0;
}

.crumb-sep {
    margin: 0 5px 0 6px;
    font-family: "Liberation Sans", sans-serif;
    font-size: 11px;
}

.crumb-actions {
    margin-left: auto;
    display: flex;
    align-items: center;
}

.act {
    display: flex;
    align-items: center;
    gap: 1px;
}

.act-sep {
    width: 1px;
    height: 13px;
    background: #000;
    margin: 0 16px 0 10px;
}

.field {
    height: 27px;
    margin-top: 3px;
    display: flex;
    border: 1px solid #999;
}

.field-label {
    flex: none;
    width: 175px;
    background: #c8c8c8;
    border-right: 1px solid #999;
    padding-right: 2px;
    line-height: 24px;
    text-align: right;
}

.field-value {
    flex: 1;
    display: flex;
    align-items: center;
    padding-left: 4px;
}

.field-input {
    flex: none;
    width: 449px;
    height: 21px;
    padding: 0;
    text-indent: -18px;
    border: 1px solid #7a9ebd;
    outline: none;
    font-family: "Liberation Mono", monospace;
    font-size: 11.670px;
    color: #000;
}

.hint {
    margin-left: 6px;
    white-space: nowrap;
}

.hint-ex {
    font-family: "Liberation Mono", monospace;
    font-size: 10px;
}

.note {
    margin: 0;
    color: #ff0000;
    line-height: 14px;
}

.note-a {
    margin: 26px 0 0 593px;
}

.note-b {
    margin: 38px 0 0 577px;
}

.note-latin {
    font-family: "Liberation Mono", monospace;
    font-size: 10px;
}

.red-arrow {
    position: absolute;
    left: 703px;
    top: 36px;
}

/* pie */
.oa-foot {
    flex: none;
    height: 25px;
    display: flex;
    align-items: center;
    background: #dcdcdc;
    border-top: 1px solid #000;
    padding: 0 14px 0 10px;
}

.online u {
    margin: 0 6px;
    color: #e00;
    font-weight: bold;
    font-family: "Liberation Mono", monospace;
}

.mail-ico {
    margin-left: 12px;
}

.mail-count {
    margin-left: 6px;
    color: #e00;
    font-weight: bold;
    font-family: "Liberation Serif", serif;
    font-size: 13px;
}

.license {
    margin-left: auto;
    letter-spacing: 0.080px;
}

.statusbar {
    flex: none;
    height: 24px;
    display: flex;
    align-items: stretch;
    justify-content: flex-end;
    background: #f2f2f2;
    color: #888;
    padding-right: 11px;
}

.st-cell {
    width: 40px;
    border-left: 1px solid #d8d8d8;
    display: flex;
    align-items: center;
    justify-content: center;
}

.st-zoom {
    width: 98px;
    border-left: 1px solid #d8d8d8;
    display: flex;
    align-items: center;
    gap: 5px;
    padding-left: 12px;
    white-space: nowrap;
}

.zoom-num {
    font-family: "Liberation Sans", sans-serif;
    font-size: 13px;
    color: #7a8aa8;
}
```
